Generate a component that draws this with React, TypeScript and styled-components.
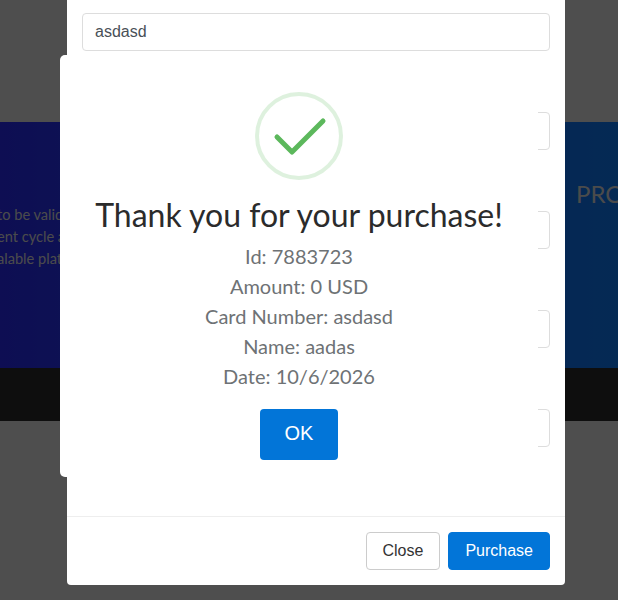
import React from "react";
import styled, { createGlobalStyle } from "styled-components";

const Global = createGlobalStyle`
  html, body { margin: 0; padding: 0; height: 100%; overflow: hidden; }
  body { background: #dfdfdf; font-family: "Lato", "Liberation Sans", sans-serif; }
  * { box-sizing: border-box; }
`;

const Page = styled.div`
  position: relative;
  width: 618px;
  height: 600px;
  overflow: hidden;
  padding-top: 122px;
  background: #dfdfdf;
`;

const Hero = styled.section`
  height: 246px;
  display: flex;
  justify-content: space-between;
  background: linear-gradient(90deg, #2829ee 0%, #0e78f0 100%);
`;

const HeroBlurb = styled.div`
  width: 70px;
  margin-left: -3px;
  padding-top: 82px;
  white-space: nowrap;
  font-size: 14.6px;
  line-height: 22px;
  color: #d8d8d8;
`;

const HeroTitle = styled.div`
  width: 42px;
  padding-top: 57px;
  white-space: nowrap;
  font-size: 24px;
  line-height: 30px;
  color: #d8d8d8;
`;

const FooterBand = styled.div`
  height: 53px;
  background: #282828;
`;

const Backdrop = styled.div`
  position: absolute;
  inset: 0;
  background: rgba(0, 0, 0, 0.65);
`;

const Modal = styled.div`
  position: absolute;
  left: 67px;
  top: -30px;
  width: 498px;
  height: 615px;
  display: flex;
  flex-direction: column;
  background: #fff;
  border-radius: 4px;
`;

const ModalBody = styled.div`
  flex: 1;
  display: flex;
  flex-direction: column;
  gap: 61px;
  padding: 43px 15px 0;
`;

const Field = styled.input`
  display: block;
  width: 100%;
  height: 38px;
  padding: 6px 12px;
  border: 1px solid #ddd;
  border-radius: 4px;
  background: #fff;
  font-family: "Liberation Sans", Arial, sans-serif;
  font-size: 16px;
  color: #495057;
  outline: none;
`;

const ModalFooter = styled.div`
  display: flex;
  justify-content: flex-end;
  gap: 8px;
  height: 69px;
  padding: 15px;
  border-top: 1px solid #eee;
`;

const FooterButton = styled.button<{ $primary?: boolean }>`
  height: 38px;
  padding: 0 16px;
  border: 1px solid ${(p) => (p.$primary ? "#0275d8" : "#ccc")};
  border-radius: 4px;
  background: ${(p) => (p.$primary ? "#0275d8" : "#fff")};
  color: ${(p) => (p.$primary ? "#fff" : "#333")};
  font-family: "Liberation Sans", Arial, sans-serif;
  font-size: 16px;
`;

const Alert = styled.div`
  position: absolute;
  left: 60px;
  top: 55px;
  width: 478px;
  height: 422px;
  display: flex;
  flex-direction: column;
  align-items: center;
  padding-top: 37px;
  background: #fff;
  border-radius: 5px;
`;

const SuccessIcon = styled.svg`
  display: block;
  width: 88px;
  height: 88px;
`;

const AlertTitle = styled.h2`
  margin: 12px 0 0;
  font-family: "Lato", sans-serif;
  font-size: 32px;
  font-weight: 400;
  line-height: 46px;
  color: #2b2b2b;
  white-space: nowrap;
`;

const AlertLines = styled.div`
  margin-top: 3px;
  text-align: center;
  font-size: 20px;
  line-height: 30px;
  color: #6e7275;
`;

const AlertLine = styled.div``;

const OkButton = styled.button`
  width: 78px;
  height: 51px;
  margin-top: 18px;
  padding: 0 0 2px;
  border: 0;
  border-radius: 4px;
  background: #0275d8;
  color: #fff;
  font-family: "Liberation Sans", Arial, sans-serif;
  font-size: 20px;
`;

export default function App() {
  return (
    <Page>
      <Global />
      <Hero>
        <HeroBlurb>
          to be valid for
          <br />
          ent cycle and
          <br />
          alable platform
        </HeroBlurb>
        <HeroTitle>PRO</HeroTitle>
      </Hero>
      <FooterBand />
      <Backdrop />
      <Modal>
        <ModalBody>
          <Field defaultValue="asdasd" />
          <Field />
          <Field />
          <Field />
          <Field />
        </ModalBody>
        <ModalFooter>
          <FooterButton>Close</FooterButton>
          <FooterButton $primary>Purchase</FooterButton>
        </ModalFooter>
      </Modal>
      <Alert>
        <SuccessIcon viewBox="0 0 88 88" fill="none">
          <circle cx="44" cy="44" r="42" stroke="#5cb85c" strokeOpacity="0.2" strokeWidth="4" />
          <path d="M22 45 L37 60 L68 29" stroke="#5cb85c" strokeWidth="5" strokeLinecap="round" strokeLinejoin="round" />
        </SuccessIcon>
        <AlertTitle>Thank you for your purchase!</AlertTitle>
        <AlertLines>
          <AlertLine>Id: 7883723</AlertLine>
          <AlertLine>Amount: 0 USD</AlertLine>
          <AlertLine>Card Number: asdasd</AlertLine>
          <AlertLine>Name: aadas</AlertLine>
          <AlertLine>Date: 10/6/2026</AlertLine>
        </AlertLines>
        <OkButton>OK</OkButton>
      </Alert>
    </Page>
  );
}
